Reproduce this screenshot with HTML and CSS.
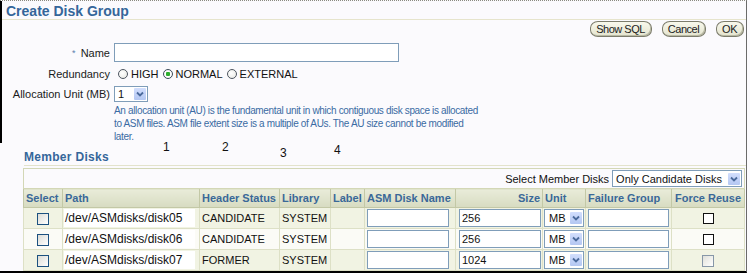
FILE: index.html
```html
<!DOCTYPE html>
<html>
<head>
<meta charset="utf-8">
<title>Create Disk Group</title>
<link rel="stylesheet" href="styles.css">
</head>
<body>
<div class="page">
  <div class="upper">
    <h1 class="title">Create Disk Group</h1>
    <div class="actions">
      <button class="btn" type="button">Show SQL</button>
      <button class="btn" type="button">Cancel</button>
      <button class="btn" type="button">OK</button>
    </div>
    <div class="form">
      <label class="lbl"><span class="req">*</span> Name</label>
      <div class="field"><span class="input name-input"></span></div>

      <label class="lbl">Redundancy</label>
      <div class="field radios">
        <span class="radio"></span><span class="rtext">HIGH</span>
        <span class="radio checked"></span><span class="rtext">NORMAL</span>
        <span class="radio"></span><span class="rtext">EXTERNAL</span>
      </div>

      <label class="lbl">Allocation Unit (MB)</label>
      <div class="field">
        <span class="select au"><span class="sel-val">1</span><span class="arrow"><svg viewBox="0 0 12 12" width="12" height="12"><path d="M3 4.5 L6 7.5 L9 4.5" fill="none" stroke="#4b6a9c" stroke-width="1.8"/></svg></span></span>
      </div>

      <p class="help">An allocation unit (AU) is the fundamental unit in which contiguous disk space is allocated<br>to ASM files. ASM file extent size is a multiple of AUs. The AU size cannot be modified<br>later.</p>
    </div>
  </div>

  <span class="callout c1">1</span>
  <span class="callout c2">2</span>
  <span class="callout c3">3</span>
  <span class="callout c4">4</span>

  <h2 class="section">Member Disks</h2>

  <table class="disks">
    <colgroup>
      <col class="w-select"><col class="w-path"><col class="w-status"><col class="w-lib"><col class="w-label">
      <col class="w-name"><col class="w-size"><col class="w-unit"><col class="w-fg"><col class="w-force">
    </colgroup>
    <tr class="toolbar">
      <td colspan="10">
        <span class="tb-label">Select Member Disks</span>
        <span class="select tb-select"><span class="sel-val">Only Candidate Disks</span><span class="arrow"><svg viewBox="0 0 12 12" width="12" height="12"><path d="M3 4.5 L6 7.5 L9 4.5" fill="none" stroke="#4b6a9c" stroke-width="1.8"/></svg></span></span>
      </td>
    </tr>
    <tr class="head">
      <th>Select</th><th>Path</th><th>Header Status</th><th>Library</th><th>Label</th>
      <th>ASM Disk Name</th><th class="right">Size</th><th>Unit</th><th>Failure Group</th><th class="center">Force Reuse</th>
    </tr>
    <tr class="band">
      <td class="center"><span class="cb"></span></td>
      <td class="path"><span class="path-box">/dev/ASMdisks/disk05</span></td>
      <td>CANDIDATE</td><td>SYSTEM</td><td></td>
      <td class="c-name"><span class="input cell-name"></span></td>
      <td class="c-size"><span class="input cell-size">256</span></td>
      <td class="c-unit"><span class="select unit"><span class="sel-val">MB</span><span class="arrow"><svg viewBox="0 0 12 12" width="12" height="12"><path d="M3 4.5 L6 7.5 L9 4.5" fill="none" stroke="#4b6a9c" stroke-width="1.8"/></svg></span></span></td>
      <td class="c-fg"><span class="input cell-fg"></span></td>
      <td class="center"><span class="cb2"></span></td>
    </tr>
    <tr class="plain">
      <td class="center"><span class="cb"></span></td>
      <td class="path"><span class="path-box">/dev/ASMdisks/disk06</span></td>
      <td>CANDIDATE</td><td>SYSTEM</td><td></td>
      <td class="c-name"><span class="input cell-name"></span></td>
      <td class="c-size"><span class="input cell-size">256</span></td>
      <td class="c-unit"><span class="select unit"><span class="sel-val">MB</span><span class="arrow"><svg viewBox="0 0 12 12" width="12" height="12"><path d="M3 4.5 L6 7.5 L9 4.5" fill="none" stroke="#4b6a9c" stroke-width="1.8"/></svg></span></span></td>
      <td class="c-fg"><span class="input cell-fg"></span></td>
      <td class="center"><span class="cb2"></span></td>
    </tr>
    <tr class="band">
      <td class="center"><span class="cb"></span></td>
      <td class="path"><span class="path-box">/dev/ASMdisks/disk07</span></td>
      <td>FORMER</td><td>SYSTEM</td><td></td>
      <td class="c-name"><span class="input cell-name"></span></td>
      <td class="c-size"><span class="input cell-size">1024</span></td>
      <td class="c-unit"><span class="select unit"><span class="sel-val">MB</span><span class="arrow"><svg viewBox="0 0 12 12" width="12" height="12"><path d="M3 4.5 L6 7.5 L9 4.5" fill="none" stroke="#4b6a9c" stroke-width="1.8"/></svg></span></span></td>
      <td class="c-fg"><span class="input cell-fg"></span></td>
      <td class="center"><span class="cb3"></span></td>
    </tr>
  </table>
</div>
</body>
</html>
```

FILE: styles.css
```css
html, body {
  margin: 0;
  padding: 0;
  background: #fbfafd;
}

body {
  font-family: "Liberation Sans", Arial, sans-serif;
  font-size: 11px;
  color: #111;
  width: 750px;
  height: 273px;
  overflow: hidden;
}

.page {
  position: relative;
  box-sizing: border-box;
  width: 747px;
  height: 273px;
  border-top: 1px dotted #8a8a80;
  border-right: 1px solid #6a6a6a;
  border-bottom: 2px solid #000;
  background: #fbfafd;
}

.upper {
  border-left: 2px solid #000;
}

.title {
  margin: 0;
  padding: 2px 0 0 4px;
  height: 16px;
  line-height: 16px;
  font-size: 14px;
  font-weight: bold;
  color: #35669a;
  border-bottom: 1px solid #e6e4cc;
}

.actions {
  display: flex;
  justify-content: flex-end;
  gap: 10px;
  margin-top: 1px;
  padding-right: 2px;
}

.btn {
  font-family: "Liberation Sans", Arial, sans-serif;
  font-size: 11px;
  letter-spacing: -0.5px;
  height: 16px;
  line-height: 14px;
  padding: 0 6px 0 5px;
  margin: 0;
  color: #222;
  border: 1px solid #7c7c6c;
  border-radius: 8px / 7px;
  background: linear-gradient(#f8f8ec, #e4e4cf);
  box-shadow: inset -1px -1px 0 #b9b9a4;
}

.form {
  display: grid;
  grid-template-columns: 108px 1fr;
  column-gap: 4px;
  row-gap: 2px;
  margin-top: 6px;
}

.lbl {
  text-align: right;
  align-self: center;
  font-size: 11px;
  color: #1a1a1a;
  white-space: nowrap;
}

.req {
  color: #5a7fae;
  font-size: 9px;
  vertical-align: 1px;
  margin-right: 2px;
}

.field {
  display: flex;
  align-items: center;
}

.input {
  display: inline-block;
  box-sizing: border-box;
  border: 1px solid #7f9db9;
  background: #fff;
  font-size: 11px;
  color: #111;
  text-align: left;
}

.name-input {
  width: 285px;
  height: 19px;
}

.radios {
  height: 20px;
}

.radio {
  display: inline-block;
  box-sizing: border-box;
  width: 10px;
  height: 10px;
  border: 1px solid #4d5560;
  border-radius: 50%;
  background: radial-gradient(circle at 40% 40%, #ffffff, #e6e6e0);
  margin-left: 4px;
}

.radio.checked {
  background: radial-gradient(circle, #2eae2e 0, #2eae2e 2px, #ffffff 2.5px, #ececec 100%);
  border-color: #3c4b5a;
}

.rtext {
  margin-left: 3px;
  font-size: 11px;
  color: #111;
}

.select {
  display: inline-flex;
  align-items: center;
  box-sizing: border-box;
  border: 1px solid #7f9db9;
  background: #fff;
  font-size: 11px;
  color: #111;
  text-align: left;
}

.sel-val {
  flex: 1;
  padding-left: 3px;
  white-space: nowrap;
  overflow: hidden;
  text-align: left;
}

.arrow {
  display: flex;
  width: 12px;
  height: 12px;
  margin-right: 1px;
  background: linear-gradient(#d2defd, #b4c7f2);
  border-radius: 1px;
}

.au {
  width: 34px;
  height: 16px;
}

.help {
  grid-column: 2;
  margin: 0;
  font-size: 10px;
  line-height: 13px;
  letter-spacing: -0.35px;
  color: #3a6ba3;
}

.callout {
  position: absolute;
  font-size: 12px;
  color: #111;
  line-height: 12px;
}
.c1 { left: 163px; top: 140px; }
.c2 { left: 222px; top: 140px; }
.c3 { left: 280px; top: 146px; }
.c4 { left: 334px; top: 143px; }

.section {
  margin: 7px 0 0 24px;
  padding-bottom: 1px;
  height: 14px;
  line-height: 14px;
  font-size: 12px;
  letter-spacing: 0.3px;
  font-weight: bold;
  color: #35669a;
  border-bottom: 1px solid #e3e3cc;
}

.disks {
  margin: 2px 0 0 23px;
  width: 721px;
  table-layout: fixed;
  border-collapse: collapse;
  border: 1px solid #d3d7b6;
}

.w-select { width: 39px; }
.w-path { width: 137px; }
.w-status { width: 80px; }
.w-lib { width: 51px; }
.w-label { width: 34px; }
.w-name { width: 91px; }
.w-size { width: 87px; }
.w-unit { width: 43px; }
.w-fg { width: 86px; }
.w-force { width: 73px; }

.disks td, .disks th {
  padding: 0 2px;
  white-space: nowrap;
  overflow: hidden;
}

.toolbar td {
  height: 19px;
  text-align: right;
  padding: 0 2px;
  background: #fbfafd;
  border-bottom: 1px solid #d3d7b6;
}

.tb-label {
  font-size: 11px;
  vertical-align: middle;
}

.tb-select {
  width: 130px;
  height: 17px;
  vertical-align: middle;
}

.tb-select .sel-val {
  padding-left: 3px;
}

.head th {
  height: 18px;
  font-size: 11px;
  font-weight: bold;
  color: #3a6898;
  text-align: left;
  background: linear-gradient(#e9ecd9, #d7dbc1);
  border: 1px solid #c3c8a6;
  border-left-color: #f1f2e6;
}

.head th:first-child {
  border-left-color: #c3c8a6;
}

.head th:nth-child(2) {
  border-left: 1px solid #7b8794;
}

.disks th.right { text-align: right; }
.disks th.center, .disks td.center { text-align: center; }

.band td { background: #f1f3e3; }
.plain td { background: #fbfbf6; }

.band td, .plain td {
  height: 20px;
  font-size: 11px;
  color: #111;
  border: 1px solid #dde0c6;
}

.disks td.path {
  padding: 0 4px 0 1px;
  font-size: 12px;
}

.path-box {
  display: block;
  background: #fff;
  line-height: 18px;
  padding-left: 1px;
}

.cb {
  display: inline-block;
  box-sizing: border-box;
  width: 12px;
  height: 12px;
  border: 1px solid #1c5180;
  background: linear-gradient(135deg, #dcdcd6, #ffffff);
  vertical-align: middle;
}

.cb2 {
  display: inline-block;
  box-sizing: border-box;
  width: 11px;
  height: 11px;
  border: 1px solid #111;
  background: #fff;
  vertical-align: middle;
}

.cb3 {
  display: inline-block;
  box-sizing: border-box;
  width: 12px;
  height: 12px;
  border: 1px solid #8797a8;
  background: linear-gradient(135deg, #e0e0da, #ffffff);
  vertical-align: middle;
}

.cell-name, .cell-size, .cell-fg {
  height: 18px;
  line-height: 16px;
  vertical-align: middle;
}

.cell-name { width: 82px; }
.cell-size { width: 82px; padding-left: 2px; }
.cell-fg { width: 81px; }

.disks td.c-size { padding-left: 3px; }
.disks td.c-unit { padding-left: 1px; }

.unit {
  width: 40px;
  height: 18px;
  vertical-align: middle;
}
.unit .sel-val { padding-left: 4px; }
```
